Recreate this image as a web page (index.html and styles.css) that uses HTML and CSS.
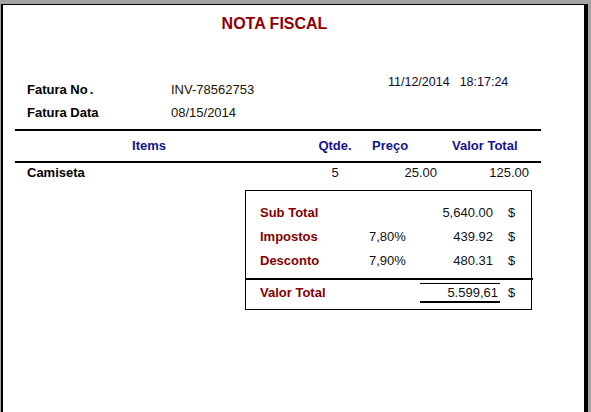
FILE: index.html
```html
<!DOCTYPE html>
<html lang="pt-BR">
<head>
    <meta charset="UTF-8">
    <meta name="viewport" content="width=device-width, initial-scale=1.0">
    <title>Nota Fiscal</title>
    <link rel="stylesheet" href="styles.css">
</head>
<body>
    <div class="page">
        <!-- cabeçalho -->
        <div class="title-wrap">
            <h1 class="title">NOTA FISCAL</h1>
        </div>

        <!-- dados da fatura -->
        <div class="meta">
            <div class="meta-info">
                <div class="meta-row">
                    <span class="meta-label">Fatura No<span class="dot">.</span></span>
                    <span class="meta-value">INV-78562753</span>
                </div>
                <div class="meta-row">
                    <span class="meta-label">Fatura Data</span>
                    <span class="meta-value">08/15/2014</span>
                </div>
            </div>
            <div class="stamp">
                <span>11/12/2014</span>
                <span>18:17:24</span>
            </div>
        </div>

        <!-- itens -->
        <div class="items">
            <div class="items-row items-head">
                <div class="col-name">Items</div>
                <div class="col-qty">Qtde.</div>
                <div class="col-price">Preço</div>
                <div class="col-total">Valor Total</div>
            </div>
            <div class="items-row items-line">
                <div class="col-name">Camiseta</div>
                <div class="col-qty">5</div>
                <div class="col-price">25.00</div>
                <div class="col-total">125.00</div>
            </div>
        </div>

        <!-- resumo -->
        <div class="summary">
            <div class="sum-row">
                <div class="sum-label">Sub Total</div>
                <div class="sum-pct"></div>
                <div class="sum-value">5,640.00</div>
                <div class="sum-cur">$</div>
            </div>
            <div class="sum-row">
                <div class="sum-label">Impostos</div>
                <div class="sum-pct">7,80%</div>
                <div class="sum-value">439.92</div>
                <div class="sum-cur">$</div>
            </div>
            <div class="sum-row">
                <div class="sum-label">Desconto</div>
                <div class="sum-pct">7,90%</div>
                <div class="sum-value">480.31</div>
                <div class="sum-cur">$</div>
            </div>
            <div class="sum-rule"></div>
            <div class="sum-row sum-total">
                <div class="sum-label">Valor Total</div>
                <div class="sum-pct"></div>
                <div class="sum-value">5.599,61</div>
                <div class="sum-cur">$</div>
            </div>
        </div>
    </div>
</body>
</html>
```

FILE: styles.css
```css
html, body {
    margin: 0;
    height: 100%;
    overflow: hidden;
}
body {
    background-color: #a3a2a5; /* cinza da janela */
    font-family: 'Liberation Sans', Arial, sans-serif;
    font-size: 13px;
    color: #111;
}
.page {
    box-sizing: border-box;
    height: calc(100% - 4px);
    margin: 4px 3px 0 1px;
    background-color: #ffffff;
    border-top: 1px solid #000;
    border-left: 2px solid #000;
    border-right: 4px solid #000;
}
.title-wrap {
    width: 526px;
    margin-left: 12px;
    padding-top: 9px;
}
.title {
    margin: 0;
    padding-right: 7px;
    text-align: center;
    font-size: 16px;
    line-height: 20px;
    font-weight: bold;
    color: #8e0000; /* vermelho escuro */
}
.meta {
    display: flex;
    align-items: flex-start;
    margin-left: 24px;
}
.meta-info {
    width: 361px;
    padding-top: 48px;
}
.meta-row {
    display: flex;
    line-height: 16px;
    margin-bottom: 7px;
}
.meta-row:last-child {
    margin-bottom: 0;
}
.meta-label {
    width: 144px;
    font-weight: bold;
    color: #000;
}
.meta-label .dot {
    margin-left: 2px;
}
.meta-value {
    color: #1a1400;
}
.stamp {
    display: flex;
    gap: 10px;
    padding-top: 40px;
    font-size: 12.5px;
    line-height: 16px;
    color: #0c0c2a;
}
.items {
    width: 526px;
    margin: 8px 0 0 12px;
}
.items-row {
    display: grid;
    grid-template-columns: 285px 70px 70px 101px;
}
.items-head {
    border-top: 2px solid #000;
    border-bottom: 2px solid #000;
    line-height: 30px;
    font-weight: bold;
    color: #14148a; /* azul marinho */
}
.items-head .col-name {
    text-align: center;
    padding-right: 17px;
}
.items-head .col-qty {
    text-align: center;
}
.items-head .col-price {
    padding-left: 2px;
}
.items-head .col-total {
    padding-left: 12px;
}
.items-line {
    line-height: 17px;
    padding-top: 1px;
}
.items-line .col-name {
    padding-left: 12px;
    font-weight: bold;
    color: #000;
}
.items-line .col-qty {
    text-align: center;
}
.items-line .col-price {
    text-align: right;
    padding-right: 3px;
}
.items-line .col-total {
    text-align: right;
    padding-right: 12px;
}
.summary {
    box-sizing: border-box;
    width: 287px;
    margin: 9px 0 0 242px;
    padding: 10px 0 6px;
    border: 1px solid #000;
}
.sum-row {
    display: grid;
    grid-template-columns: 114px 60px 80px 31px;
    line-height: 24px;
}
.sum-label {
    padding-left: 14px;
    font-weight: bold;
    color: #820000;
}
.sum-pct {
    padding-left: 9px;
}
.sum-value {
    text-align: right;
    padding-right: 7px;
}
.sum-cur {
    padding-left: 8px;
}
.sum-rule {
    margin: 5px -2px 0 -1px;
    border-top: 2px solid #000;
}
.sum-total {
    line-height: 16px;
}
.sum-total .sum-label,
.sum-total .sum-cur {
    padding-top: 5px;
}
.sum-total .sum-value {
    margin-top: 3px;
    padding-top: 1px;
    padding-right: 2px;
    border-top: 1px solid #000;
    border-bottom: 2px solid #000;
}
```
